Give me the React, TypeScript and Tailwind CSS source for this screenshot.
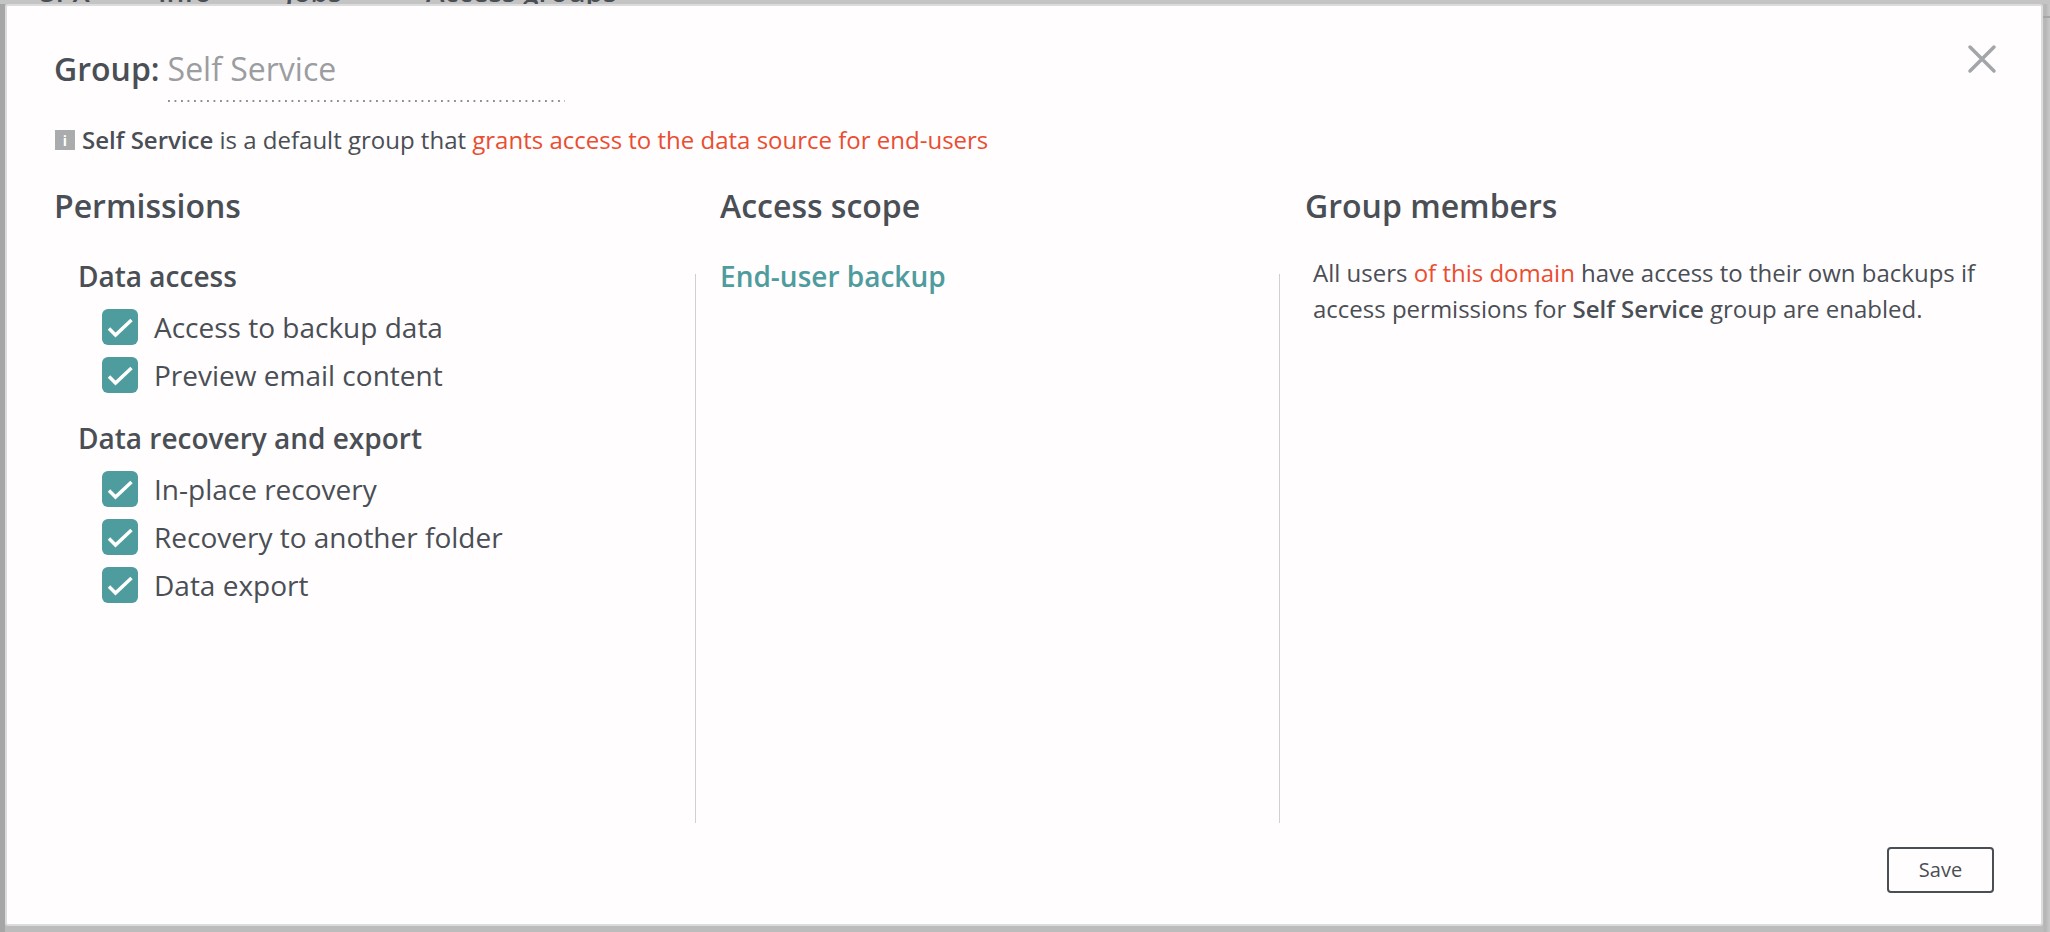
const font = "font-['Open_Sans',sans-serif]";

function Check({ label }: { label: string }) {
  return (
    <div className="flex h-[48px] items-center">
      <span className="h-[36px] w-[36px] rounded-[6px] bg-[#4e9c9d]">
        <svg width="36" height="36" viewBox="0 0 36 36" fill="none" stroke="#ffffff" strokeWidth="3.500">
          <path d="M7 19.500l6.500 6.500L29.500 11" />
        </svg>
      </span>
      <span className="ml-[16px] text-[28px] leading-[48px] text-[#4a4e55]">{label}</span>
    </div>
  );
}

export default function App() {
  return (
    <div className={`${font} relative flex h-[932px] w-[2050px] flex-col overflow-hidden bg-[linear-gradient(to_right,#a6a6a6_5px,#bcbcbc_5px,#bcbcbc_2043px,#b4b4b4_2045px,#c9c9c9_2050px)] text-[#4a4e55]`}>
      <div className="absolute left-[2043px] top-[16px] h-[2px] w-[7px] bg-[#a5a5a5]" />
      <div className="h-[4px] shrink-0 overflow-hidden bg-[#c4c4c4]">
        <div className="ml-[40px] mt-[-23px] flex text-[28px] font-semibold leading-[28px] text-[#4a4e55]">
          <span className="w-[118px]">SPX</span><span className="w-[127px]">Info</span><span className="w-[141px]">Jobs</span><span>Access groups</span>
        </div>
      </div>
      <div className="relative mb-[6px] ml-[5px] mr-[7px] flex flex-1 flex-col rounded-[3px] border-[2px] border-[#dcdcdc] bg-[#fffdfe] pl-[47px] pr-[30px]">
        <button className="absolute right-[44px] top-[38px]" aria-label="Close">
          <svg width="30" height="30" viewBox="0 0 30 30" fill="none" stroke="#a3a6a8" strokeWidth="3.500" strokeLinecap="round"><path d="M3 3l24 24M27 3L3 27" /></svg>
        </button>
        <div className="mt-[41px] flex h-[53px] items-start">
          <span className="text-[32px] font-semibold leading-[44px]">Group:</span>
          <span className="ml-[8px] text-[32px] leading-[44px] text-[#9b9da0]">Self Service</span>
        </div>
        <div className="ml-[114px] h-[2px] w-[397px] bg-[linear-gradient(to_right,#8d8f92_2px,transparent_2px)] bg-[length:6.500px_2px]" />
        <div className="ml-[1px] mt-[20px] flex h-[36px] items-center text-[24px]">
          <span className="mr-[7px] flex h-[20px] w-[20px] shrink-0 items-center justify-center bg-[#a9abad] text-[14px] font-bold text-white">i</span>
          <span><b className="font-semibold">Self Service</b> is a default group that <span className="text-[#ea4d30]">grants access to the data source for end-users</span></span>
        </div>
        <div className="mt-[26px] flex flex-1">
          <div className="w-[666px]">
            <h2 className="text-[32px] font-semibold leading-[44px]">Permissions</h2>
            <div className="mt-[28px]">
              <h3 className="ml-[24px] text-[28px] font-semibold leading-[40px]">Data access</h3>
              <div className="ml-[48px] mt-[7px]"><Check label="Access to backup data" /><Check label="Preview email content" /></div>
              <h3 className="ml-[24px] mt-[19px] text-[28px] font-semibold leading-[40px]">Data recovery and export</h3>
              <div className="ml-[48px] mt-[7px]"><Check label="In-place recovery" /><Check label="Recovery to another folder" /><Check label="Data export" /></div>
            </div>
          </div>
          <div className="w-[585px]">
            <h2 className="text-[32px] font-semibold leading-[44px]">Access scope</h2>
            <div className="mt-[29px] flex h-[566px]">
              <div className="ml-[-25px] mr-[24px] mt-[17px] w-[1px] bg-[#cfd0d2]" />
              <h3 className="mt-[-1px] text-[28px] font-semibold leading-[40px] text-[#4e9c9d]">End-user backup</h3>
            </div>
          </div>
          <div className="flex-1">
            <h2 className="text-[32px] font-semibold leading-[44px]">Group members</h2>
            <div className="mt-[29px] flex h-[566px]">
              <div className="ml-[-26px] mr-[33px] mt-[17px] w-[1px] bg-[#cfd0d2]" />
              <p className="mt-[-2px] w-[690px] text-[24px] leading-[36px]">All users <span className="text-[#ea4d30]">of this domain</span> have access to their own backups if access permissions for <b className="font-semibold">Self Service</b> group are enabled.</p>
            </div>
          </div>
        </div>
        <div className="mb-[31px] flex justify-end pr-[17px]">
          <button className="h-[46px] w-[107px] rounded-[4px] border-[2px] border-[#4a4e55] text-[20px] text-[#4a4e55]">Save</button>
        </div>
      </div>
    </div>
  );
}
